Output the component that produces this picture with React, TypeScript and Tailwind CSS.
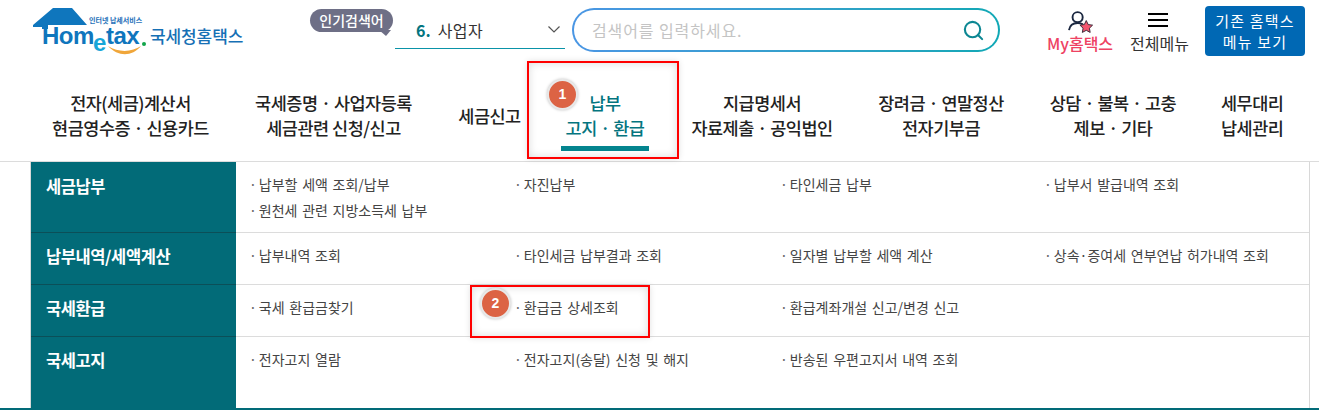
import { Search } from "lucide-react";

const font = "font-['Noto_Sans_CJK_KR','Liberation_Sans',sans-serif]";

const navItems: { lines: string[]; className: string; active?: boolean }[] = [
  { lines: ["전자(세금)계산서", "현금영수증 · 신용카드"], className: "w-[157px]" },
  { lines: ["국세증명 · 사업자등록", "세금관련 신청/신고"], className: "w-[157px] ml-[46px]" },
  { lines: ["세금신고"], className: "w-[63px] ml-[46px]" },
  { lines: ["납부", "고지 · 환급"], className: "w-[88px] ml-[40px]", active: true },
  { lines: ["지급명세서", "자료제출 · 공익법인"], className: "w-[142px] ml-[42px]" },
  { lines: ["장려금 · 연말정산", "전자기부금"], className: "w-[126px] ml-[45px]" },
  { lines: ["상담 · 불복 · 고충", "제보 · 기타"], className: "w-[128px] ml-[45px]" },
  { lines: ["세무대리", "납세관리"], className: "w-[62px] ml-[44px]" },
];

const menuRows: { title: string; height: string; links: string[] }[] = [
  {
    title: "세금납부",
    height: "h-[70px]",
    links: ["납부할 세액 조회/납부", "자진납부", "타인세금 납부", "납부서 발급내역 조회", "원천세 관련 지방소득세 납부"],
  },
  {
    title: "납부내역/세액계산",
    height: "h-[52px]",
    links: ["납부내역 조회", "타인세금 납부결과 조회", "일자별 납부할 세액 계산", "상속·증여세 연부연납 허가내역 조회"],
  },
  {
    title: "국세환급",
    height: "h-[52px]",
    links: ["국세 환급금찾기", "환급금 상세조회", "환급계좌개설 신고/변경 신고"],
  },
  {
    title: "국세고지",
    height: "h-[72px]",
    links: ["전자고지 열람", "전자고지(송달) 신청 및 해지", "반송된 우편고지서 내역 조회"],
  },
];

function Logo() {
  return (
    <div className="relative h-[56px] w-[215px] shrink-0">
      <svg width="118" height="56" viewBox="0 0 118 56" className="absolute left-0 top-0" aria-hidden>
        <path d="M2 21 L22 4 H41 L56 21 H17 V25 H11 V23 H2 Z" fill="#0f76bd" />
        <path d="M77 42 C87 53 101 53 110 42 C101 48 88 49 77 42 Z" fill="#f0a63a" />
        <circle cx="113" cy="40" r="2" fill="#12a54a" />
      </svg>
      <span className="absolute left-[58px] top-[12px] whitespace-nowrap text-[7px] font-bold leading-[8px] text-[#1d6fb8]">
        인터넷 납세서비스
      </span>
      <span className="absolute left-[11px] top-[20px] font-['Liberation_Sans',sans-serif] text-[24px] font-bold leading-[24px] tracking-[-0.5px] text-[#0f76bd]">
        Hom
      </span>
      <span className="absolute left-[62px] top-[27px] font-['Liberation_Sans',sans-serif] text-[24px] font-bold leading-[24px] text-[#17a6d8]">
        e
      </span>
      <span className="absolute left-[75px] top-[20px] font-['Liberation_Sans',sans-serif] text-[24px] font-bold leading-[24px] tracking-[-0.6px] text-[#0f76bd]">
        tax
      </span>
      <span className="absolute left-[119px] top-[19px] whitespace-nowrap text-[17px] font-medium leading-[26px] tracking-[-0.1px] text-[#1670b5]">
        국세청홈택스
      </span>
    </div>
  );
}

function Marker({ n, className }: { n: number; className: string }) {
  return (
    <span
      className={`absolute flex h-[31px] w-[31px] items-center justify-center rounded-full border-2 border-[#e8e8e8] bg-[#dc6344] font-['Liberation_Sans',sans-serif] text-[14px] font-bold text-white shadow-[0_0_3px_rgba(0,0,0,0.25)] ${className}`}
    >
      {n}
    </span>
  );
}

function Header() {
  return (
    <header className="flex h-[60px] items-start pl-[31px]">
      <div className="pt-[4px]">
        <Logo />
      </div>
      <div className="relative ml-[64px] mt-[9px] flex h-[23px] w-[83px] items-center justify-center rounded-[12px] bg-[#6e6f86] text-[14px] font-medium text-white">
        인기검색어
        <svg width="12" height="7" viewBox="0 0 12 7" className="absolute right-[2px] top-[21px]" aria-hidden>
          <path d="M0 0 H12 L7 6 Z" fill="#6e6f86" />
        </svg>
      </div>
      <div className="ml-[2px] mt-[15px] flex h-[34px] w-[170px] items-center border-b border-[#0a93a8] pb-[4px] pl-[21px] pr-[5px] text-[16px] text-[#333]">
        <b className="mr-[7px] text-[#04757f]">6.</b>
        <span className="tracking-[0.5px]">사업자</span>
        <svg width="12" height="7" viewBox="0 0 12 7" className="ml-auto" aria-hidden>
          <path d="M0.5 0.5 L6 6 L11.5 0.5" fill="none" stroke="#555" strokeWidth="1.2" />
        </svg>
      </div>
      <div className="ml-[7px] mt-[8px] h-[44px] w-[428px] rounded-[22px] bg-linear-to-r from-[#4a96e4] to-[#0fa8b5] p-[2px]">
        <div className="flex h-full items-center rounded-[20px] bg-white pl-[18px] pr-[13px] text-[16px] tracking-[0.9px] text-[#c4c4c4]">
          검색어를 입력하세요.
          <Search className="ml-auto h-[23px] w-[23px] text-[#0c8793]" strokeWidth={2.2} />
        </div>
      </div>
      <div className="ml-[46px] mt-[10px] flex w-[68px] flex-col items-center">
        <svg width="27" height="23" viewBox="0 0 28 24" aria-hidden>
          <circle cx="11" cy="7.5" r="5.3" fill="none" stroke="#1b2740" strokeWidth="2" />
          <path d="M2 21 C3 15 7 13.5 11 13.5 C13 13.5 15 14 16.5 15" fill="none" stroke="#1b2740" strokeWidth="2" />
          <path d="M20 11 L22 15.2 L26.6 15.8 L23.3 19 L24.1 23.4 L20 21.2 L15.9 23.4 L16.7 19 L13.4 15.8 L18 15.2 Z" fill="#f4566f" stroke="#3a2a38" strokeWidth="1" />
        </svg>
        <span className="whitespace-nowrap text-[16px] font-medium leading-[20px] text-[#ee4263]">My홈택스</span>
      </div>
      <div className="ml-[16px] mt-[13px] flex w-[59px] flex-col items-center">
        <div className="mr-[3px] flex h-[14px] w-[20px] flex-col justify-between">
          <span className="h-[2px] bg-black" />
          <span className="h-[2px] bg-black" />
          <span className="h-[2px] bg-black" />
        </div>
        <span className="mt-[6px] whitespace-nowrap text-[16px] leading-[20px] text-[#333]">전체메뉴</span>
      </div>
      <div className="ml-[16px] mt-[6px] flex h-[50px] w-[100px] flex-col items-center justify-center rounded-[4px] bg-[#0068b4] text-[15px] leading-[21px] tracking-[1.2px] text-white">
        <span>기존 홈택스</span>
        <span>메뉴 보기</span>
      </div>
    </header>
  );
}

function Nav() {
  return (
    <nav className="relative flex h-[102px] items-center border-b border-[#dcdcdc] pl-[52px] pt-[9px]">
      {navItems.map((item) => (
        <div
          key={item.lines.join("")}
          className={`shrink-0 text-center text-[17.5px] font-medium leading-[25px] tracking-[-0.5px] ${item.className} ${
            item.active ? "text-[#04757f]" : "text-[#222]"
          }`}
        >
          {item.lines.map((line) => (
            <div key={line} className="whitespace-nowrap">
              {line}
            </div>
          ))}
        </div>
      ))}
      <div className="absolute left-[561px] top-[86px] h-[5px] w-[88px] bg-[#04858f]" />
      <div className="absolute left-[527px] top-[1px] h-[98px] w-[152px] border-2 border-[#f00] shadow-[0_0_6px_rgba(0,0,0,0.12),inset_0_0_8px_rgba(0,0,0,0.15)]" />
      <Marker n={1} className="left-[547px] top-[19px]" />
    </nav>
  );
}

function MenuTable() {
  return (
    <main className="relative flex h-[246px] pl-[30px] pr-[9px]">
      <div className="w-full border-l border-r border-[#d8d8d8]">
        {menuRows.map((row, i) => (
          <div key={row.title} className={`flex ${row.height} ${i > 0 ? "border-t border-[#dcdcdc]" : ""}`}>
            <div
              className={`w-[205px] shrink-0 bg-[#026b78] pl-[15px] text-[16.5px] font-bold leading-[22px] tracking-[-0.4px] text-white ${
                i > 0 ? "-mt-px border-t border-[#0b4f58] pt-[12px]" : "pt-[13px]"
              }`}
            >
              {row.title}
            </div>
            <ul className="grid flex-1 grid-cols-[265px_266px_264px_1fr] content-start gap-y-[6px] pl-[13px] pt-[12px]">
              {row.links.map((link) => (
                <li key={link} className="h-[20px] whitespace-nowrap text-[14px] leading-[20px] text-[#444] [word-spacing:1.5px]">
                  <span className="mr-[2px] text-[#666]">·</span>
                  {link}
                </li>
              ))}
            </ul>
          </div>
        ))}
      </div>
      <div className="absolute left-[470px] top-[123px] h-[53px] w-[180px] border-2 border-[#f00] shadow-[0_0_6px_rgba(0,0,0,0.12),inset_0_0_8px_rgba(0,0,0,0.15)]" />
      <Marker n={2} className="left-[480px] top-[126px]" />
    </main>
  );
}

export default function App() {
  return (
    <div className={`h-[411px] w-[1319px] overflow-hidden bg-white ${font}`}>
      <Header />
      <Nav />
      <MenuTable />
      <div className="h-[2px] bg-[#026b78]" />
    </div>
  );
}
